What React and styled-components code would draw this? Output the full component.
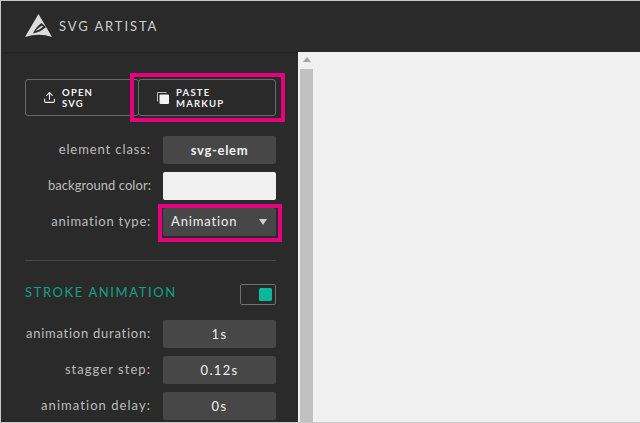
import React from "react";
import styled, { createGlobalStyle } from "styled-components";
import { Upload } from "lucide-react";

const GlobalStyle = createGlobalStyle`
  html, body {
    margin: 0;
    padding: 0;
    background: #f0f0f0;
    overflow: hidden;
  }
  * {
    box-sizing: border-box;
  }
`;

const Frame = styled.div`
  position: relative;
  width: 640px;
  height: 423px;
  display: flex;
  flex-direction: column;
  overflow: hidden;
  background: #2a2a2a;
  border: 1px solid #c8c8c8;
  border-right: none;
  font-family: "Lato", "Liberation Sans", sans-serif;
`;

const Header = styled.header`
  height: 51px;
  flex: none;
  display: flex;
  align-items: center;
  gap: 7px;
  padding: 0 0 2px 24px;
  background: #2a2a2a;
  box-shadow: 0 1px 2px rgba(0, 0, 0, 0.25);
`;

const Brand = styled.span`
  color: #cfcfcf;
  font-size: 13px;
  letter-spacing: 1.9px;
`;

const Main = styled.div`
  flex: 1;
  min-height: 0;
  display: flex;
`;

const Sidebar = styled.aside`
  width: 297px;
  flex: none;
  padding: 27px 22px 0 24px;
  display: flex;
  flex-direction: column;
`;

const ButtonRow = styled.div`
  display: flex;
  height: 37px;
  margin-bottom: 20px;
`;

const FileButton = styled.button`
  width: ${(p) => p.$width}px;
  margin-right: ${(p) => p.$overlap || 0}px;
  display: flex;
  align-items: center;
  gap: ${(p) => p.$gap}px;
  padding: 0 0 0 ${(p) => p.$inset}px;
  background: transparent;
  border: 1px solid #6a6a6a;
  border-radius: 3px;
  color: #f2f2f2;
  font-family: inherit;
  font-size: 9.5px;
  font-weight: 700;
  letter-spacing: 1.2px;
  line-height: 11px;
  text-align: left;
`;

const Form = styled.div`
  display: flex;
  flex-direction: column;
  gap: 8px;
`;

const Row = styled.div`
  display: flex;
  align-items: center;
  gap: 12px;
`;

const Label = styled.label`
  width: 126px;
  flex: none;
  margin-top: -2px;
  text-align: right;
  color: #bdbdbd;
  font-size: 13px;
  letter-spacing: ${(p) => p.$spacing || 1.05}px;
  white-space: nowrap;
`;

const Field = styled.div`
  width: 113px;
  height: 28px;
  flex: none;
  display: flex;
  align-items: center;
  justify-content: ${(p) => (p.$select ? "space-between" : "center")};
  padding: ${(p) => (p.$select ? "0 9px 2px 8px" : "0 0 1px")};
  border-radius: 2px;
  background: ${(p) => p.$bg || "#474747"};
  color: #f0f0f0;
  font-size: 13px;
  font-weight: ${(p) => (p.$bold ? 700 : 400)};
  letter-spacing: ${(p) => p.$spacing || 1.3}px;
`;

const Caret = styled.span`
  width: 0;
  height: 0;
  margin-top: 2px;
  border-left: 4.5px solid transparent;
  border-right: 4.5px solid transparent;
  border-top: 6px solid #cfcfcf;
`;

const Divider = styled.hr`
  width: 100%;
  height: 1px;
  margin: 24px 0 23px;
  border: none;
  background: #4a4a4a;
`;

const SectionHead = styled.div`
  display: flex;
  align-items: center;
  justify-content: space-between;
  height: 21px;
  margin-bottom: 15px;
`;

const SectionTitle = styled.h2`
  margin: 0 0 5px;
  color: #0fa386;
  font-size: 13px;
  font-weight: 400;
  letter-spacing: 1.6px;
`;

const Toggle = styled.div`
  width: 36px;
  height: 21px;
  display: flex;
  align-items: center;
  justify-content: flex-end;
  padding-right: 3px;
  border: 1px solid #6f6f6f;
  border-radius: 2px;
`;

const Knob = styled.span`
  width: 13px;
  height: 13px;
  border-radius: 1.5px;
  background: #0db89a;
`;

const Scrollbar = styled.div`
  width: 17px;
  flex: none;
  display: flex;
  flex-direction: column;
  align-items: center;
  padding: 5px 2px 0;
  background: #f0f0f0;
`;

const ScrollArrow = styled.span`
  width: 0;
  height: 0;
  margin-bottom: 7px;
  border-left: 4px solid transparent;
  border-right: 4px solid transparent;
  border-bottom: 5px solid #a6a6a6;
`;

const ScrollThumb = styled.div`
  width: 13px;
  flex: 1;
  background: #c1c1c1;
`;

const Canvas = styled.main`
  flex: 1;
  background: #f0f0f0;
`;

const Highlight = styled.div`
  position: absolute;
  left: ${(p) => p.$x}px;
  top: ${(p) => p.$y}px;
  width: ${(p) => p.$w}px;
  height: ${(p) => p.$h}px;
  border: 4px solid #e6007e;
  pointer-events: none;
`;

const Logo = () => (
  <svg width="27" height="23" viewBox="0 0 27 23">
    <path d="M13.5 0 L27 23 Q14 18.5 0 23 Z" fill="#dcdcdc" />
    <path d="M8 19.5 C10 15 13 11.5 16.5 9 L21 13 C17.5 16.5 13 18.5 8 19.5 Z" fill="#2a2a2a" />
    <path d="M10.5 17 C12.5 15 14.5 13 17 11.5 L18 12.5 C16 14.5 13.5 16 10.5 17 Z" fill="#dcdcdc" />
  </svg>
);

const PasteIcon = () => (
  <svg width="12" height="12" viewBox="0 0 12 12">
    <path d="M0 9.5V1.2C0 .5.5 0 1.2 0H9.5V1H1V9.5Z" fill="#bdbdbd" />
    <rect x="2.5" y="2.5" width="9.5" height="9.5" rx="1" fill="#f2f2f2" />
  </svg>
);

const App = () => {
  return (
    <Frame>
      <GlobalStyle />
      <Header>
        <Logo />
        <Brand>SVG ARTISTA</Brand>
      </Header>
      <Main>
        <Sidebar>
          <ButtonRow>
            <FileButton $width={114} $overlap={-1} $inset={17} $gap={6}>
              <Upload size={13} strokeWidth={2} color="#f2f2f2" />
              <span>OPEN<br />SVG</span>
            </FileButton>
            <FileButton $width={138} $inset={18} $gap={7}>
              <PasteIcon />
              <span>PASTE<br />MARKUP</span>
            </FileButton>
          </ButtonRow>
          <Form>
            <Row>
              <Label $spacing={0.9}>element class:</Label>
              <Field $bold $spacing={0.7}>svg-elem</Field>
            </Row>
            <Row>
              <Label $spacing={0.05}>background color:</Label>
              <Field $bg="#f0f0f0" />
            </Row>
            <Row>
              <Label $spacing={0.75}>animation type:</Label>
              <Field $select $spacing={0.85}>Animation<Caret /></Field>
            </Row>
          </Form>
          <Divider />
          <SectionHead>
            <SectionTitle>STROKE ANIMATION</SectionTitle>
            <Toggle><Knob /></Toggle>
          </SectionHead>
          <Form>
            <Row>
              <Label $spacing={0.75}>animation duration:</Label>
              <Field>1s</Field>
            </Row>
            <Row>
              <Label>stagger step:</Label>
              <Field>0.12s</Field>
            </Row>
            <Row>
              <Label>animation delay:</Label>
              <Field>0s</Field>
            </Row>
          </Form>
        </Sidebar>
        <Scrollbar>
          <ScrollArrow />
          <ScrollThumb />
        </Scrollbar>
        <Canvas />
      </Main>
      <Highlight $x={129} $y={72} $w={155} $h={49} />
      <Highlight $x={157} $y={203} $w={124} $h={38} />
    </Frame>
  );
};

export default App;
